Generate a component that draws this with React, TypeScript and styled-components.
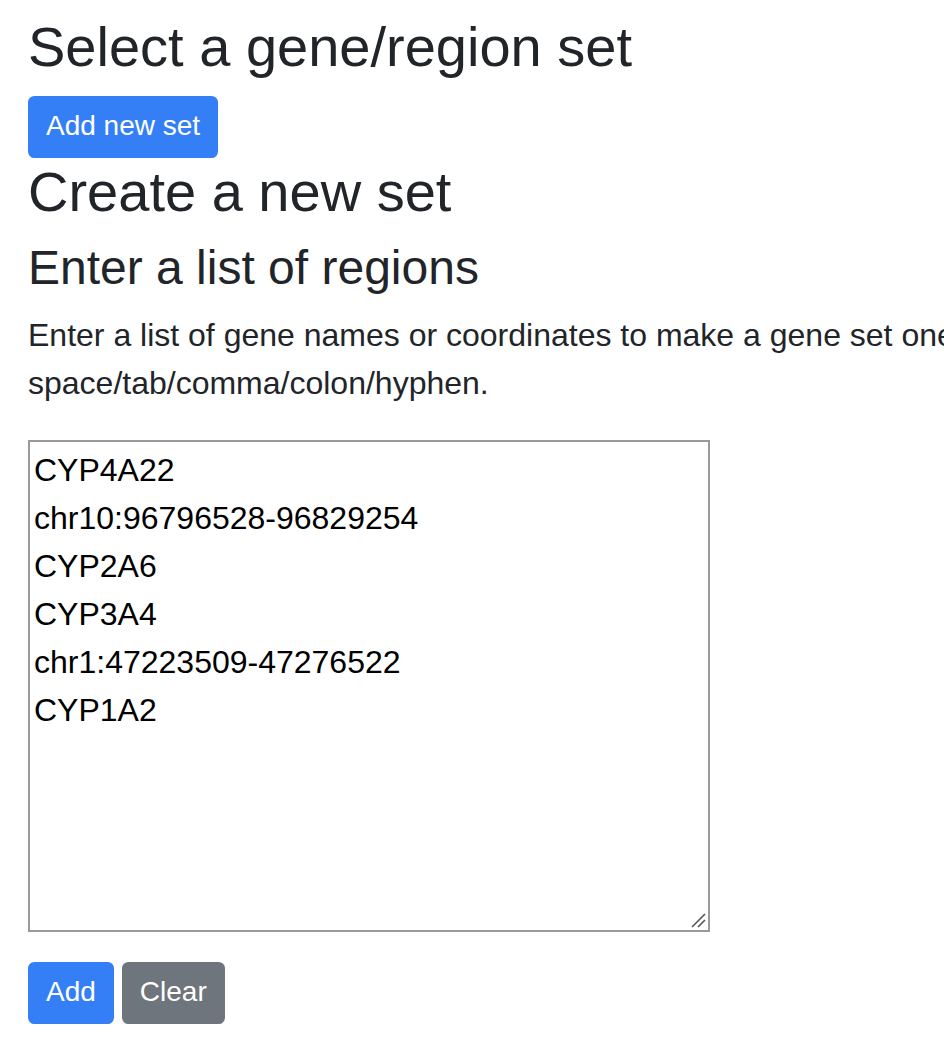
import React from "react";
import styled, { createGlobalStyle } from "styled-components";

const GlobalStyle = createGlobalStyle`
  html, body {
    margin: 0;
    padding: 0;
    background: #ffffff;
    overflow: hidden;
  }
  body {
    font-family: "Liberation Sans", Arial, Helvetica, sans-serif;
    color: #212529;
  }
`;

const Page = styled.div`
  width: 944px;
  min-height: 1054px;
  box-sizing: border-box;
  padding: 13px 0 0 28px;
  overflow: hidden;
`;

const Heading = styled.h3<{ $gap?: number }>`
  margin: 0 0 ${(p) => (p.$gap ?? 16)}px;
  font-size: 56px;
  font-weight: 500;
  line-height: 1.2;
  color: #212529;
  white-space: nowrap;
`;

const SubHeading = styled.h4`
  margin: 0 0 14px;
  font-size: 48px;
  font-weight: 500;
  line-height: 1.2;
  color: #212529;
  white-space: nowrap;
`;

const Lead = styled.p`
  width: 1700px;
  margin: 0 0 33px;
  font-size: 32px;
  line-height: 48px;
  color: #212529;
`;

const Button = styled.button<{ $variant: "primary" | "secondary" }>`
  display: inline-block;
  box-sizing: border-box;
  margin: 0;
  padding: 7px 16px 9px;
  border: 2px solid ${(p) => (p.$variant === "primary" ? "#357ff6" : "#6f757c")};
  border-radius: 6.4px;
  background: ${(p) => (p.$variant === "primary" ? "#357ff6" : "#6f757c")};
  color: #ffffff;
  font-family: "Liberation Sans", Arial, Helvetica, sans-serif;
  font-size: 28px;
  line-height: 42px;
  font-weight: 400;
  cursor: pointer;
`;

const ButtonRow = styled.div`
  display: flex;
  gap: 8px;
  align-items: flex-start;
`;

const FieldWrap = styled.div`
  position: relative;
  width: 682px;
  height: 492px;
  margin-bottom: 30px;
`;

const Area = styled.textarea`
  display: block;
  box-sizing: border-box;
  width: 682px;
  height: 492px;
  margin: 0;
  padding: 4px;
  border: 2px solid #9a9a9a;
  border-radius: 0;
  font-family: "Liberation Sans", Arial, Helvetica, sans-serif;
  font-size: 32px;
  line-height: 48px;
  color: #000000;
  background: #ffffff;
  resize: none;
  outline: none;
  overflow: hidden;
`;

const Grip = styled.svg`
  position: absolute;
  right: 4px;
  bottom: 4px;
  width: 16px;
  height: 16px;
  pointer-events: none;
`;

const regions = [
  "CYP4A22",
  "chr10:96796528-96829254",
  "CYP2A6",
  "CYP3A4",
  "chr1:47223509-47276522",
  "CYP1A2",
].join("\n");

export default function App() {
  return (
    <>
      <GlobalStyle />
      <Page>
        <Heading>Select a gene/region set</Heading>
        <div>
          <Button $variant="primary">Add new set</Button>
        </div>
        <Heading $gap={14}>Create a new set</Heading>
        <SubHeading>Enter a list of regions</SubHeading>
        <Lead>
          Enter a list of gene names or coordinates to make a gene set one per line. Coordinates can be
          separated by space/tab/comma/colon/hyphen.
        </Lead>
        <FieldWrap>
          <Area defaultValue={regions} spellCheck={false} />
          <Grip viewBox="0 0 16 16">
            <path d="M2 15 L15 2" stroke="#555" strokeWidth="1.6" />
            <path d="M8 15 L15 8" stroke="#555" strokeWidth="1.6" />
          </Grip>
        </FieldWrap>
        <ButtonRow>
          <Button $variant="primary">Add</Button>
          <Button $variant="secondary">Clear</Button>
        </ButtonRow>
      </Page>
    </>
  );
}
